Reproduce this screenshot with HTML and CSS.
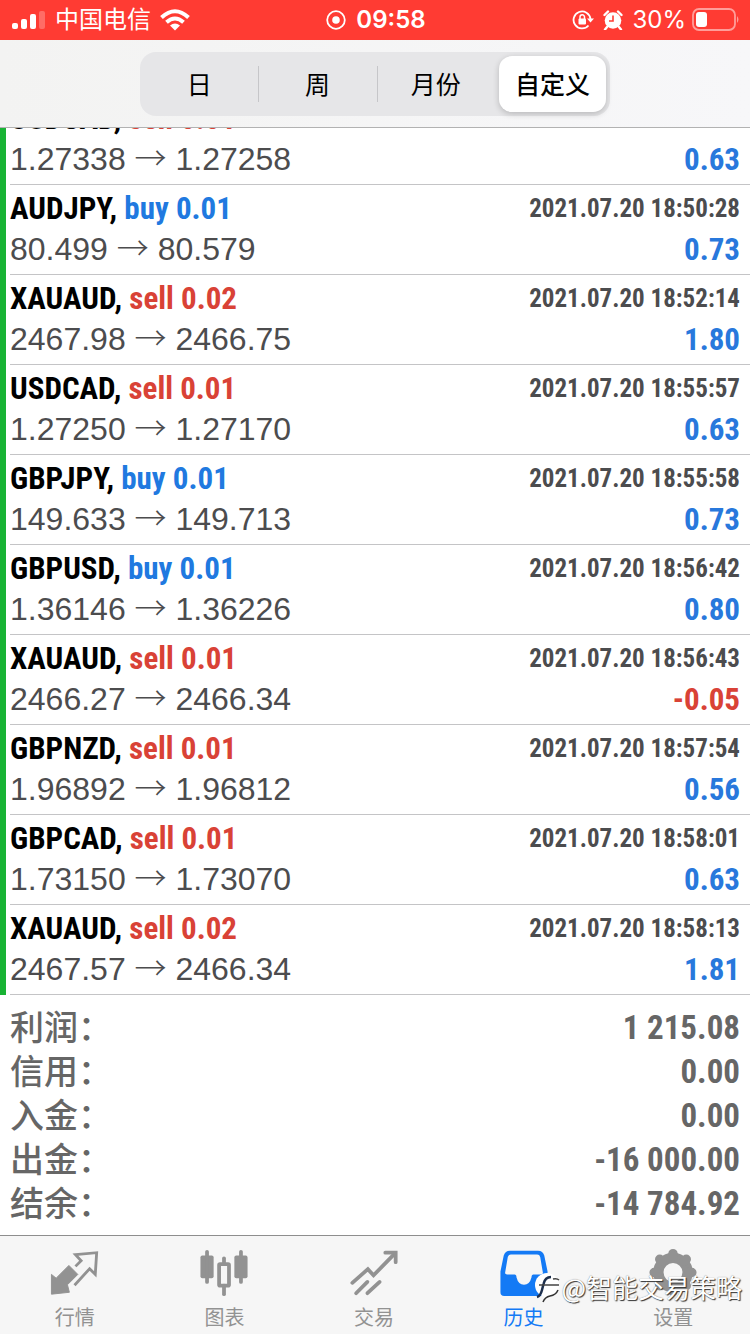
FILE: index.html
```html
<!DOCTYPE html>
<html lang="zh-CN">
<head>
<meta charset="utf-8">
<meta name="viewport" content="width=device-width, initial-scale=1">
<title>历史</title>
<link rel="stylesheet" href="styles.css">
</head>
<body>
<div class="app">
  <div class="status">
    <div class="status-side">
      <svg class="signal" width="34" height="18" viewBox="0 0 34 18"><g fill="#fff"><rect x="0" y="12" width="6" height="6" rx="2"/><rect x="9" y="8" width="6" height="10" rx="2"/><rect x="18" y="3" width="6" height="15" rx="2"/><rect x="27" y="0" width="6" height="18" rx="2" opacity=".25"/></g></svg>
      <span>中国电信</span>
      <svg width="30" height="22" viewBox="0 0 30 22"><g fill="none" stroke="#fff" stroke-width="4"><path d="M1.500 8.500Q15-4 28.500 8.500"/><path d="M6.500 13.300Q15 5.700 23.500 13.300"/></g><path d="M10 16.500Q15 12.500 20 16.500L15 21.500Z" fill="#fff"/></svg>
    </div>
    <div class="status-time">
      <svg width="20" height="20" viewBox="0 0 20 20"><circle cx="10" cy="10" r="8.800" fill="none" stroke="#fff" stroke-width="1.800"/><circle cx="10" cy="10" r="3.800" fill="#fff"/></svg>
      <time>09:58</time>
    </div>
    <div class="status-side status-end">
      <svg width="22" height="20" viewBox="0 0 22 20"><path d="M18.500 9A8.500 8.500 0 1 0 16.500 15.500" fill="none" stroke="#fff" stroke-width="1.800"/><path d="M15 8.500H22L18.500 12.500Z" fill="#fff"/><rect x="6.500" y="8.500" width="7.500" height="6" rx="1" fill="#fff"/><path d="M8 9V7a2.200 2.200 0 0 1 4.500 0V9" fill="none" stroke="#fff" stroke-width="1.500"/></svg>
      <svg class="alarm" width="20" height="20" viewBox="0 0 20 20"><circle cx="10" cy="10.500" r="8.300" fill="#fff"/><path d="M1.500 5L5 1.500M18.500 5L15 1.500M4 17L2 19.500M16 17L18 19.500" stroke="#fff" stroke-width="2.400" stroke-linecap="round"/><path d="M10 5.500V11H6" fill="none" stroke="#ff3b33" stroke-width="1.600"/></svg>
      <span>30%</span>
      <svg width="48" height="24" viewBox="0 0 48 24"><rect x="1" y="1" width="42" height="21" rx="6" fill="none" stroke="#fff" stroke-width="1.800" opacity=".5"/><rect x="4" y="4" width="11" height="15" rx="3" fill="#fff"/><path d="M45 8Q48 11.500 45 15Z" fill="#fff" opacity=".5"/></svg>
    </div>
  </div>

  <header class="header">
    <nav class="segments">
      <button class="segment">日</button>
      <button class="segment">周</button>
      <button class="segment">月份</button>
      <button class="segment selected">自定义</button>
    </nav>
  </header>

  <main class="content">
    <ul class="deals">
      <li class="deal"><b class="symbol">USDCAD, <span class="sell">sell 0.01</span></b><span class="price">1.27338 <i class="arrow">→</i> 1.27258</span><b class="profit">0.63</b></li>
      <li class="deal"><b class="symbol">AUDJPY, <span class="buy">buy 0.01</span></b><time class="date">2021.07.20 18:50:28</time><span class="price">80.499 <i class="arrow">→</i> 80.579</span><b class="profit">0.73</b></li>
      <li class="deal"><b class="symbol">XAUAUD, <span class="sell">sell 0.02</span></b><time class="date">2021.07.20 18:52:14</time><span class="price">2467.98 <i class="arrow">→</i> 2466.75</span><b class="profit">1.80</b></li>
      <li class="deal"><b class="symbol">USDCAD, <span class="sell">sell 0.01</span></b><time class="date">2021.07.20 18:55:57</time><span class="price">1.27250 <i class="arrow">→</i> 1.27170</span><b class="profit">0.63</b></li>
      <li class="deal"><b class="symbol">GBPJPY, <span class="buy">buy 0.01</span></b><time class="date">2021.07.20 18:55:58</time><span class="price">149.633 <i class="arrow">→</i> 149.713</span><b class="profit">0.73</b></li>
      <li class="deal"><b class="symbol">GBPUSD, <span class="buy">buy 0.01</span></b><time class="date">2021.07.20 18:56:42</time><span class="price">1.36146 <i class="arrow">→</i> 1.36226</span><b class="profit">0.80</b></li>
      <li class="deal"><b class="symbol">XAUAUD, <span class="sell">sell 0.01</span></b><time class="date">2021.07.20 18:56:43</time><span class="price">2466.27 <i class="arrow">→</i> 2466.34</span><b class="profit loss">-0.05</b></li>
      <li class="deal"><b class="symbol">GBPNZD, <span class="sell">sell 0.01</span></b><time class="date">2021.07.20 18:57:54</time><span class="price">1.96892 <i class="arrow">→</i> 1.96812</span><b class="profit">0.56</b></li>
      <li class="deal"><b class="symbol">GBPCAD, <span class="sell">sell 0.01</span></b><time class="date">2021.07.20 18:58:01</time><span class="price">1.73150 <i class="arrow">→</i> 1.73070</span><b class="profit">0.63</b></li>
      <li class="deal"><b class="symbol">XAUAUD, <span class="sell">sell 0.02</span></b><time class="date">2021.07.20 18:58:13</time><span class="price">2467.57 <i class="arrow">→</i> 2466.34</span><b class="profit">1.81</b></li>
    </ul>
    <dl class="summary">
      <div class="total"><dt>利润<span class="colon">：</span></dt><dd>1 215.08</dd></div>
      <div class="total"><dt>信用<span class="colon">：</span></dt><dd>0.00</dd></div>
      <div class="total"><dt>入金<span class="colon">：</span></dt><dd>0.00</dd></div>
      <div class="total"><dt>出金<span class="colon">：</span></dt><dd>-16 000.00</dd></div>
      <div class="total"><dt>结余<span class="colon">：</span></dt><dd>-14 784.92</dd></div>
    </dl>
  </main>

  <nav class="tabs">
    <button class="tab">
      <svg width="52" height="52" viewBox="0 0 52 52"><path d="M19.500 18.500L29 28L18 39L20 47L1 49V28L6 32Z" fill="currentColor" stroke="currentColor" stroke-linejoin="round"/><path d="M26.500 19.500L32.500 13.500L26.500 7L49 5L47.500 28L41.500 22L25.500 39.500" fill="none" stroke="currentColor" stroke-width="3"/></svg>
      <span>行情</span>
    </button>
    <button class="tab">
      <svg width="52" height="52" viewBox="0 0 52 52"><g fill="currentColor"><rect x="1" y="8" width="14" height="24" rx="2"/><rect x="6" y="2" width="4" height="36" rx="2"/><rect x="37" y="8" width="14" height="24" rx="2"/><rect x="42" y="2" width="4" height="36" rx="2"/><rect x="24" y="9" width="4" height="9" rx="2"/><rect x="24" y="38" width="4" height="13" rx="2"/></g><rect x="20.800" y="17" width="10.500" height="23" rx="1" fill="none" stroke="currentColor" stroke-width="4"/></svg>
      <span>图表</span>
    </button>
    <button class="tab">
      <svg width="52" height="52" viewBox="0 0 52 52"><g fill="none" stroke="currentColor" stroke-width="4" stroke-linecap="round"><path d="M3 37L19.500 22.500L25.500 29L48 6"/><path d="M38 5H49V15"/><path d="M7 48L19 36M19 48L32 36"/></g></svg>
      <span>交易</span>
    </button>
    <button class="tab active">
      <svg width="52" height="52" viewBox="0 0 52 52"><path fill="currentColor" fill-rule="evenodd" d="M11 3H41Q46 3 47.500 8L51 25V47Q51 51 47 51H5Q1 51 1 47V25L4.500 8Q6 3 11 3ZM12 7Q9.500 7 8.800 9.500L6 26Q5.500 28 8 28H16Q18 28 18 31Q20 39 26 39Q32 39 34 31Q34 28 36 28H44Q46.500 28 46 26L43.200 9.500Q42.500 7 40 7Z"/></svg>
      <span>历史</span>
    </button>
    <button class="tab">
      <svg width="52" height="52" viewBox="0 0 52 52"><circle cx="26" cy="26" r="15.500" fill="none" stroke="currentColor" stroke-width="11"/><g stroke="currentColor" stroke-width="10" stroke-linecap="round"><path d="M26 6V9M26 43V46M6 26H9M43 26H46M11.900 11.900L14 14M38 38L40.100 40.100M40.100 11.900L38 14M14 38L11.900 40.100"/></g></svg>
      <span>设置</span>
    </button>
    <div class="watermark">
      <svg width="28" height="34" viewBox="0 0 28 34"><circle cx="14" cy="15" r="12" fill="#fff"/><path d="M18 7Q12 7 10.500 14L9 20Q7.500 26 4 27" fill="none" stroke="#1d2f4d" stroke-width="2.500"/><path d="M6 15H26M20 9Q24 8 26 10" fill="none" stroke="#444" stroke-width="1.500"/><path d="M10 32Q12 27 17 26Q23 25 25 20" fill="none" stroke="#333" stroke-width="1.500"/></svg>
      <span>@智能交易策略</span>
    </div>
  </nav>
</div>
</body>
</html>
```
FILE: styles.css
```css
* { box-sizing: border-box; }
body, ul, dl, dd { margin: 0; padding: 0; }
body {
  background: #fff;
  color: #4c4c4e;
  font-family: "Liberation Sans", "Noto Sans CJK SC", sans-serif;
}
button {
  border: 0;
  padding: 0;
  background: none;
  color: inherit;
  font-family: inherit;
}
.app {
  display: flex;
  flex-direction: column;
  height: 100vh;
}
.status {
  display: flex;
  align-items: center;
  flex: none;
  height: 40px;
  padding: 0 10px 0 12px;
  background: #ff3b33;
  color: #fff;
  font-family: Inter, "Noto Sans CJK SC", sans-serif;
  font-size: 24px;
  line-height: 40px;
}
.status-side {
  display: flex;
  align-items: center;
  flex: 1;
  gap: 9px;
}
.status-end { justify-content: flex-end; gap: 6px; }
.alarm { margin: 0 3px; }
.status-time {
  display: flex;
  align-items: center;
  gap: 10px;
  font-weight: 600;
}
.header {
  flex: none;
  padding: 12px 140px 11px;
  border-bottom: 1px solid #b2b2b2;
  background: linear-gradient(90deg, #f3f3f2, #f7f7f9);
}
.segments {
  display: flex;
  padding: 4px 0;
  border-radius: 16px;
  background: #e6e6e8;
}
.segment {
  position: relative;
  flex: 1;
  height: 56px;
  padding-bottom: 2px;
  border-radius: 13px;
  color: #000;
  font-size: 25px;
}
.segment + .segment:not(.selected)::before {
  position: absolute;
  top: 10px;
  bottom: 10px;
  left: 0;
  width: 1px;
  background: #c6c6c9;
  content: "";
}
.segment.selected {
  flex: none;
  margin: 0 4px;
  padding: 0 16px 2px;
  background: #fff;
  box-shadow: 0 2px 6px rgba(0, 0, 0, .2);
  font-weight: 500;
}
.content {
  flex: 1;
  min-height: 0;
  overflow: hidden;
}
.deals {
  margin-top: -33px;
  list-style: none;
}
.deal {
  display: grid;
  grid-template-columns: 1fr auto;
  grid-template-rows: 46px 36px;
  align-items: center;
  padding: 0 10px 8px 4px;
  border-left: 6px solid #18b334;
  background: linear-gradient(#c4c4c6, #c4c4c6) 4px 100% / 100% 1px no-repeat;
  white-space: nowrap;
}
.symbol, .date, .profit, .total dd {
  font-family: "Roboto Condensed", "Liberation Sans Narrow", "Liberation Sans", sans-serif;
  font-weight: 700;
}
.symbol { color: #000; font-size: 31px; }
.date { font-size: 25px; }
.price { grid-row: 2; font-size: 32px; }
.profit { grid-row: 2; color: #2878dc; font-size: 31px; text-align: right; }
.buy { color: #2079e0; }
.sell, .loss { color: #d94236; }
.arrow {
  font-family: "Noto Sans CJK SC", sans-serif;
  font-style: normal;
  font-weight: 300;
  line-height: 1;
}
.summary {
  padding: 11px 10px;
  color: #666;
}
.total {
  display: flex;
  justify-content: space-between;
  align-items: center;
  height: 44px;
}
.total dt {
  padding-bottom: 4px;
  font-family: "Noto Sans CJK SC", sans-serif;
  font-size: 34px;
  font-weight: 500;
  line-height: 38px;
}
.colon {
  font-family: "Noto Sans CJK TC", sans-serif;
  font-feature-settings: "halt";
}
.total dd { padding-bottom: 2px; font-size: 33px; }
.tabs {
  position: relative;
  display: flex;
  flex: none;
  height: 99px;
  padding-right: 2px;
  border-top: 1px solid #8e8e8e;
  background: #f6f6f6;
}
.tab {
  display: flex;
  flex: 1;
  flex-direction: column;
  align-items: center;
  justify-content: flex-start;
  gap: 5px;
  padding-top: 12px;
  color: #929292;
  font-size: 20px;
  line-height: 32px;
}
.active { color: #147af5; }
.watermark {
  position: absolute;
  right: 8px;
  bottom: 29px;
  display: flex;
  align-items: center;
  color: #fff;
  font-family: "Noto Sans CJK SC", sans-serif;
  font-size: 26px;
  line-height: 36px;
  text-shadow: 1px 1px 1px #333, 0 0 1px #777;
}
```
